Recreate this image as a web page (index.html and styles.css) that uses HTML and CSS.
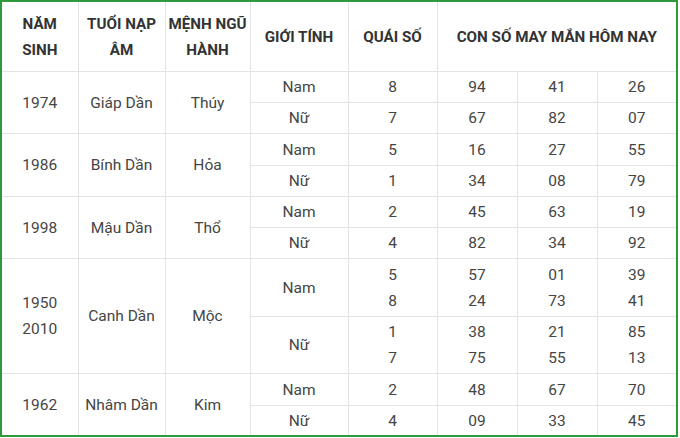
FILE: index.html
```html
<!DOCTYPE html>
<html lang="vi">
<head>
<meta charset="utf-8">
<link rel="stylesheet" href="styles.css">
</head>
<body>
<div class="frame">
<table class="tbl">
<colgroup>
<col class="c1"><col class="c2"><col class="c3"><col class="c4"><col class="c5"><col class="c6"><col class="c7"><col class="c8">
</colgroup>
<thead>
<tr class="head">
<th>NĂM<br>SINH</th>
<th>TUỔI NẠP<br>ÂM</th>
<th>MỆNH NGŨ<br>HÀNH</th>
<th>GIỚI TÍNH</th>
<th>QUÁI SỐ</th>
<th colspan="3">CON SỐ MAY MẮN HÔM NAY</th>
</tr>
</thead>
<tbody>
<tr class="r31"><td rowspan="2">1974</td><td rowspan="2">Giáp Dần</td><td rowspan="2">Thúy</td><td>Nam</td><td>8</td><td>94</td><td>41</td><td>26</td></tr>
<tr class="r31"><td>Nữ</td><td>7</td><td>67</td><td>82</td><td>07</td></tr>
<tr class="r32"><td rowspan="2">1986</td><td rowspan="2">Bính Dần</td><td rowspan="2">Hỏa</td><td>Nam</td><td>5</td><td>16</td><td>27</td><td>55</td></tr>
<tr class="r31"><td>Nữ</td><td>1</td><td>34</td><td>08</td><td>79</td></tr>
<tr class="r31"><td rowspan="2">1998</td><td rowspan="2">Mậu Dần</td><td rowspan="2">Thổ</td><td>Nam</td><td>2</td><td>45</td><td>63</td><td>19</td></tr>
<tr class="r31"><td>Nữ</td><td>4</td><td>82</td><td>34</td><td>92</td></tr>
<tr class="r58"><td rowspan="2">1950<br>2010</td><td rowspan="2">Canh Dần</td><td rowspan="2">Mộc</td><td>Nam</td><td>5<br>8</td><td>57<br>24</td><td>01<br>73</td><td>39<br>41</td></tr>
<tr class="r57"><td>Nữ</td><td>1<br>7</td><td>38<br>75</td><td>21<br>55</td><td>85<br>13</td></tr>
<tr class="r32"><td rowspan="2">1962</td><td rowspan="2">Nhâm Dần</td><td rowspan="2">Kim</td><td>Nam</td><td>2</td><td>48</td><td>67</td><td>70</td></tr>
<tr class="r31 last"><td>Nữ</td><td>4</td><td>09</td><td>33</td><td>45</td></tr>
</tbody>
</table>
</div>
</body>
</html>
```

FILE: styles.css
```css
html, body {
  margin: 0;
  padding: 0;
  background: #ffffff;
}
.frame {
  width: 674px;
  height: 433px;
  border: 2px solid #2f9a3c;
  overflow: hidden;
}
.tbl {
  width: 674px;
  border-collapse: collapse;
  table-layout: fixed;
  font-family: Roboto, "Liberation Sans", sans-serif;
  font-size: 15.5px;
  color: #454545;
}
.c1 { width: 76px; }
.c2 { width: 87px; }
.c3 { width: 85px; }
.c4 { width: 98px; }
.c5 { width: 89px; }
.c6 { width: 80px; }
.c7 { width: 80px; }
.c8 { width: 79px; }
.tbl th, .tbl td {
  border: 1px solid #e4e4e8;
  text-align: center;
  vertical-align: middle;
  padding: 0;
  line-height: 26px;
}
.tbl tr > :first-child { border-left: none; }
.tbl tr > :last-child { border-right: none; }
.tbl thead th { border-top: none; }
.tbl tr.last td { border-bottom: none; }
.head th {
  height: 69px;
  font-weight: 700;
  color: #333333;
  font-size: 15.2px;
}
.r31 td { height: 30px; }
.r32 td { height: 31px; }
.r58 td { height: 57px; }
.r57 td { height: 56px; }
```
